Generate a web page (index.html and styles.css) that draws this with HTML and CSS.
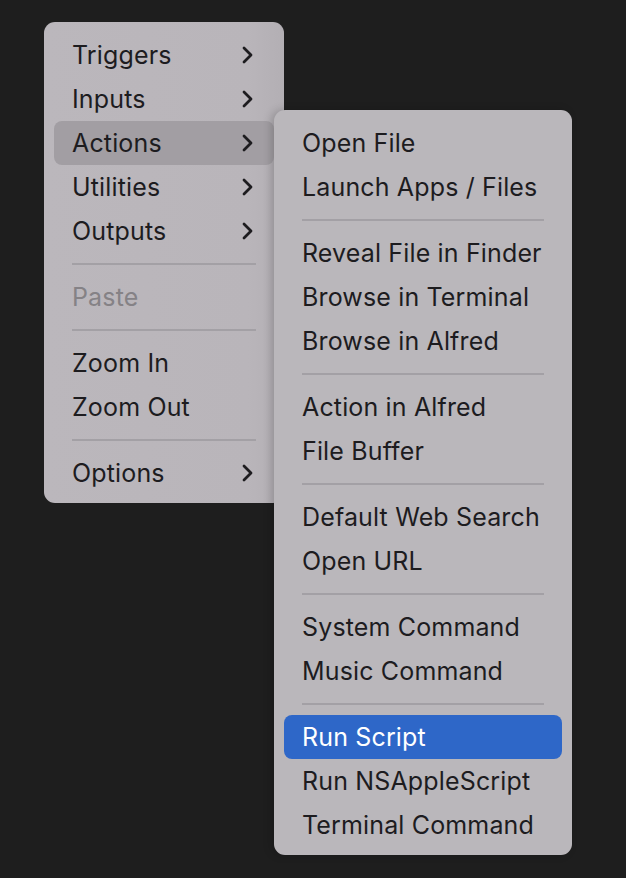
FILE: index.html
```html
<!DOCTYPE html>
<html>
<head>
<meta charset="utf-8">
<link rel="stylesheet" href="styles.css">
</head>
<body>
<div class="stage">
  <div class="menu main">
    <div class="item">Triggers<svg class="chev" viewBox="0 0 11 18"><path d="M2 2 L9 9 L2 16"/></svg></div>
    <div class="item">Inputs<svg class="chev" viewBox="0 0 11 18"><path d="M2 2 L9 9 L2 16"/></svg></div>
    <div class="item open">Actions<svg class="chev" viewBox="0 0 11 18"><path d="M2 2 L9 9 L2 16"/></svg></div>
    <div class="item">Utilities<svg class="chev" viewBox="0 0 11 18"><path d="M2 2 L9 9 L2 16"/></svg></div>
    <div class="item">Outputs<svg class="chev" viewBox="0 0 11 18"><path d="M2 2 L9 9 L2 16"/></svg></div>
    <div class="sep"></div>
    <div class="item disabled">Paste</div>
    <div class="sep"></div>
    <div class="item">Zoom In</div>
    <div class="item">Zoom Out</div>
    <div class="sep"></div>
    <div class="item">Options<svg class="chev" viewBox="0 0 11 18"><path d="M2 2 L9 9 L2 16"/></svg></div>
  </div>
  <div class="menu sub">
    <div class="item">Open File</div>
    <div class="item">Launch Apps / Files</div>
    <div class="sep"></div>
    <div class="item">Reveal File in Finder</div>
    <div class="item">Browse in Terminal</div>
    <div class="item">Browse in Alfred</div>
    <div class="sep"></div>
    <div class="item">Action in Alfred</div>
    <div class="item">File Buffer</div>
    <div class="sep"></div>
    <div class="item">Default Web Search</div>
    <div class="item">Open URL</div>
    <div class="sep"></div>
    <div class="item">System Command</div>
    <div class="item">Music Command</div>
    <div class="sep"></div>
    <div class="item selected">Run Script</div>
    <div class="item">Run NSAppleScript</div>
    <div class="item">Terminal Command</div>
  </div>
</div>
</body>
</html>
```
FILE: styles.css
```css
html, body {
  margin: 0;
  padding: 0;
  background: #1e1e1e;
  height: 100%;
}
body {
  font-family: Inter, "Noto Sans", sans-serif;
  font-size: 25px;
  color: #1d1c1f;
  -webkit-font-smoothing: antialiased;
}
.stage {
  display: flex;
  align-items: flex-start;
  padding: 22px 0 0 44px;
}
.menu {
  background: #bab6bb;
  border-radius: 11px;
  padding: 11px 10px 8px;
  box-sizing: border-box;
  display: flex;
  flex-direction: column;
}
.main {
  width: 240px;
  background: linear-gradient(to right, #bbb7bc 0%, #b9b5ba 85%, #b3afb4 100%);
}
.sub {
  width: 298px;
  margin-top: 88px;
  margin-left: -10px;
  background: #bab7bb;
  box-shadow: -3px 0 8px rgba(0, 0, 0, 0.18);
  position: relative;
}
.item {
  height: 44px;
  display: flex;
  align-items: center;
  justify-content: space-between;
  padding: 0 18px;
  border-radius: 8px;
  letter-spacing: 0.15px;
  white-space: nowrap;
}
.item.open {
  background: #a29ea3;
}
.item.disabled {
  color: #858286;
}
.item.selected {
  background: #2e67c8;
  color: #ffffff;
}
.chev {
  flex: none;
  width: 11px;
  height: 18px;
  margin-right: 3px;
  fill: none;
  stroke: #1d1c1f;
  stroke-width: 2.8;
  stroke-linecap: round;
  stroke-linejoin: round;
}
.sep {
  height: 2px;
  background: #a3a0a5;
  margin: 10px 18px;
}
```
